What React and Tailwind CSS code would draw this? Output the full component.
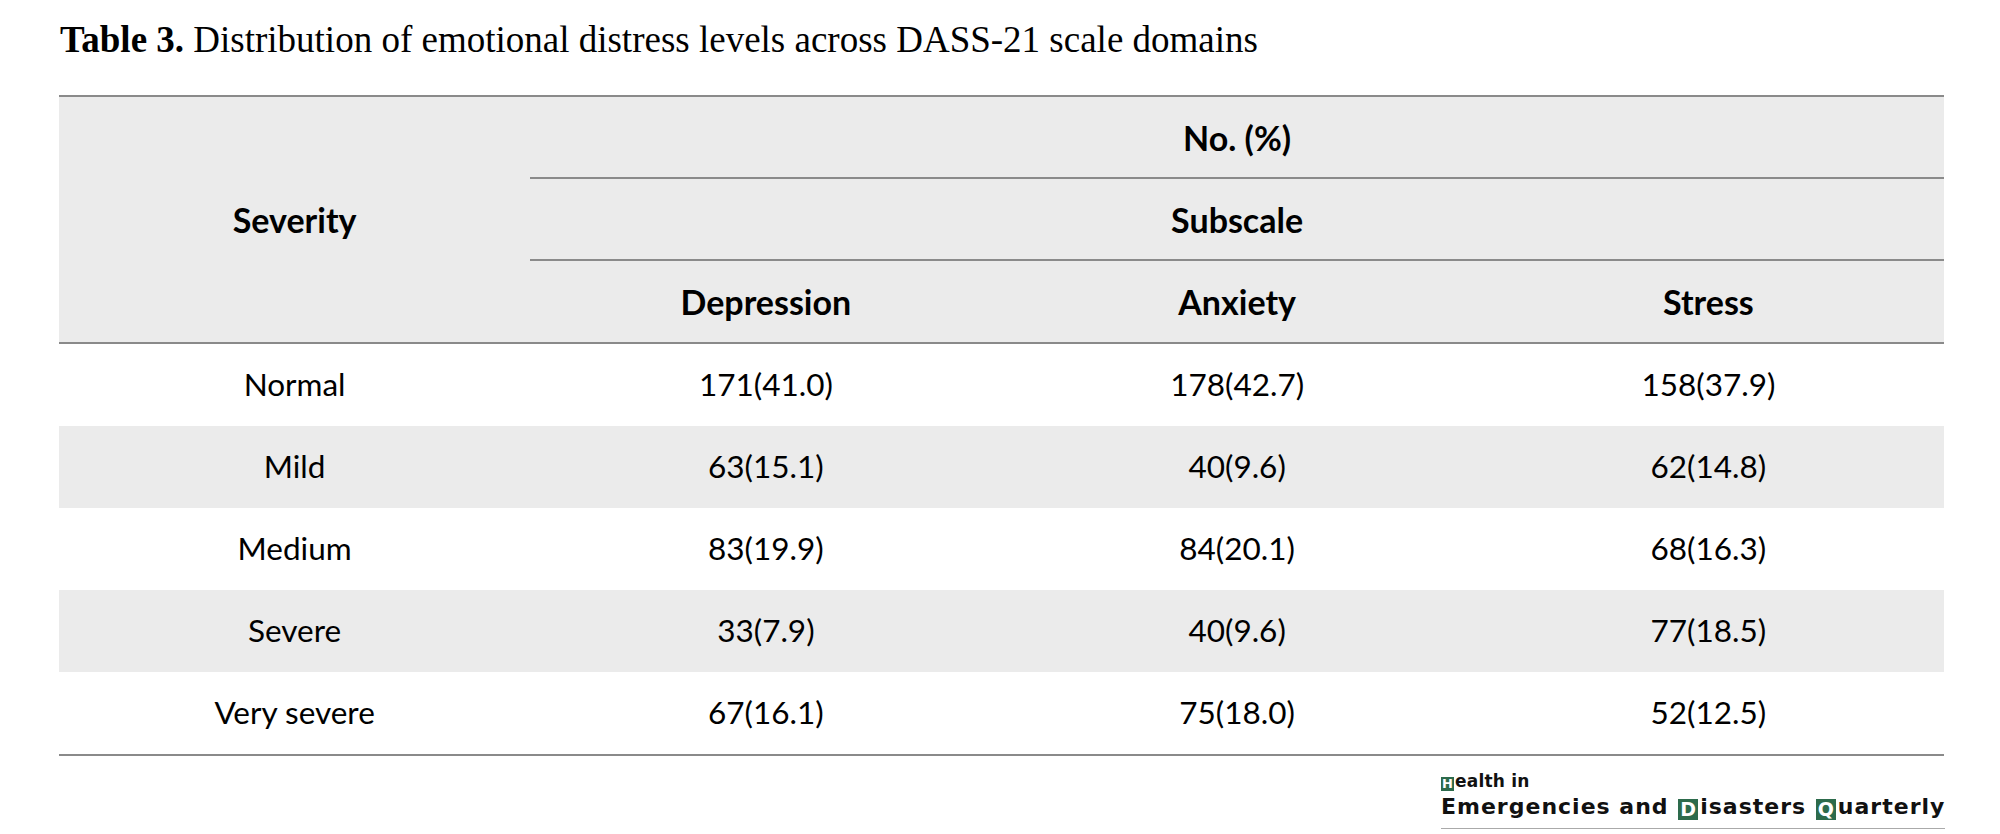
import React from "react";

const rows = [
  ["Normal", "171(41.0)", "178(42.7)", "158(37.9)"],
  ["Mild", "63(15.1)", "40(9.6)", "62(14.8)"],
  ["Medium", "83(19.9)", "84(20.1)", "68(16.3)"],
  ["Severe", "33(7.9)", "40(9.6)", "77(18.5)"],
  ["Very severe", "67(16.1)", "75(18.0)", "52(12.5)"],
];

function Box({ ch, size }) {
  return (
    <span
      className={
        size === "sm"
          ? "inline-flex items-center justify-center bg-[#2d6b4c] text-white w-[13px] h-[14px] text-[13px] leading-none mr-[1px] align-[-1px] tracking-normal"
          : "inline-flex items-center justify-center bg-[#2d6b4c] text-white w-[20px] h-[21px] text-[19px] leading-none ml-[1px] mr-[2px] align-[-2px] tracking-normal"
      }
    >
      {ch}
    </span>
  );
}

export default function App() {
  return (
    <div className="w-[2000px] h-[834px] bg-white overflow-hidden">
      <div
        className="pl-[60px] pt-[20px] h-[95px] text-[37px] leading-[40px] text-black"
        style={{ fontFamily: '"Liberation Serif", serif' }}
      >
        <span className="font-bold">Table 3.</span> Distribution of emotional distress levels across DASS-21 scale domains
      </div>
      <div
        className="ml-[59px] w-[1885px] border-t-2 border-b-2 border-[#8a8a8a] text-black"
        style={{ fontFamily: 'Lato, "Noto Sans", sans-serif' }}
      >
        <div className="grid grid-cols-4 bg-[#ebebeb] border-b-2 border-[#8a8a8a] font-bold text-[34px]">
          <div className="row-span-3 flex items-center justify-center">Severity</div>
          <div className="col-span-3 h-[82px] flex items-center justify-center border-b-2 border-[#8a8a8a]">No. (%)</div>
          <div className="col-span-3 h-[82px] flex items-center justify-center border-b-2 border-[#8a8a8a]">Subscale</div>
          <div className="h-[81px] flex items-center justify-center">Depression</div>
          <div className="h-[81px] flex items-center justify-center">Anxiety</div>
          <div className="h-[81px] flex items-center justify-center">Stress</div>
        </div>
        {rows.map((r, i) => (
          <div
            key={i}
            className={
              "grid grid-cols-4 h-[82px] text-[31.5px] " + (i % 2 === 1 ? "bg-[#ebebeb]" : "bg-white")
            }
          >
            {r.map((c, j) => (
              <div key={j} className="flex items-center justify-center">
                {c}
              </div>
            ))}
          </div>
        ))}
      </div>
      <div className="flex justify-end w-[1945px] pt-[15px]">
        <div
          className="w-[504px] border-b border-[#aaaaaa] pb-[5px] text-[#111]"
          style={{ fontFamily: '"DejaVu Sans", sans-serif' }}
        >
          <div className="text-[17px] leading-[20px] font-bold tracking-[0.2px]">
            <Box ch="H" size="sm" />ealth in
          </div>
          <div className="text-[22px] leading-[32px] font-bold tracking-[1px] whitespace-nowrap">
            Emergencies and <Box ch="D" />isasters <Box ch="Q" />uarterly
          </div>
        </div>
      </div>
    </div>
  );
}
